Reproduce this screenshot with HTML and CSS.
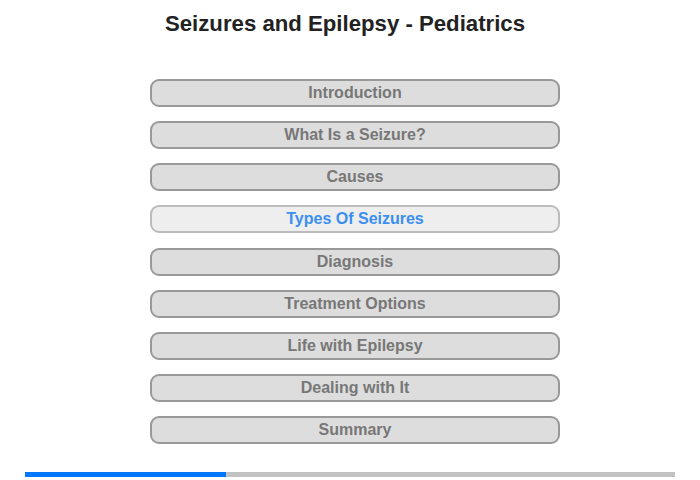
FILE: index.html
```html
<!DOCTYPE html>
<html>
<head>
<meta charset="utf-8">
<link rel="stylesheet" href="styles.css">
</head>
<body>
<div class="page">
  <h1 class="title">Seizures and Epilepsy - Pediatrics</h1>
  <nav class="menu">
    <div class="item">Introduction</div>
    <div class="item">What Is a Seizure?</div>
    <div class="item">Causes</div>
    <div class="item active">Types Of Seizures</div>
    <div class="item">Diagnosis</div>
    <div class="item">Treatment Options</div>
    <div class="item">Life with Epilepsy</div>
    <div class="item">Dealing with It</div>
    <div class="item">Summary</div>
  </nav>
  <div class="progress"><div class="progress-fill" style="width:201px"></div></div>
</div>
</body>
</html>
```

FILE: styles.css
```css
html, body {
  margin: 0;
  padding: 0;
  background: #fff;
}
.page {
  width: 700px;
  height: 480px;
  font-family: "Liberation Sans", Arial, sans-serif;
  display: flex;
  flex-direction: column;
}
.title {
  margin: 11px 10px 0 0;
  font-size: 22.2px;
  line-height: 25px;
  font-weight: bold;
  color: #222;
  text-align: center;
}
.menu {
  margin: 43px 0 0 150px;
  width: 410px;
  display: flex;
  flex-direction: column;
  gap: 14.125px;
}
.item {
  box-sizing: border-box;
  height: 28px;
  border: 2px solid #999;
  border-radius: 9px;
  background: #ddd;
  color: #777;
  font-size: 16px;
  font-weight: bold;
  line-height: 24px;
  text-align: center;
}
.item.active {
  background: #eee;
  border-color: #bbb;
  color: #3b8ff0;
}
.progress {
  margin: 28px 0 0 25px;
  width: 650px;
  height: 5px;
  background: #c2c2c2;
}
.progress-fill {
  height: 100%;
  background: #0079ff;
}
```
